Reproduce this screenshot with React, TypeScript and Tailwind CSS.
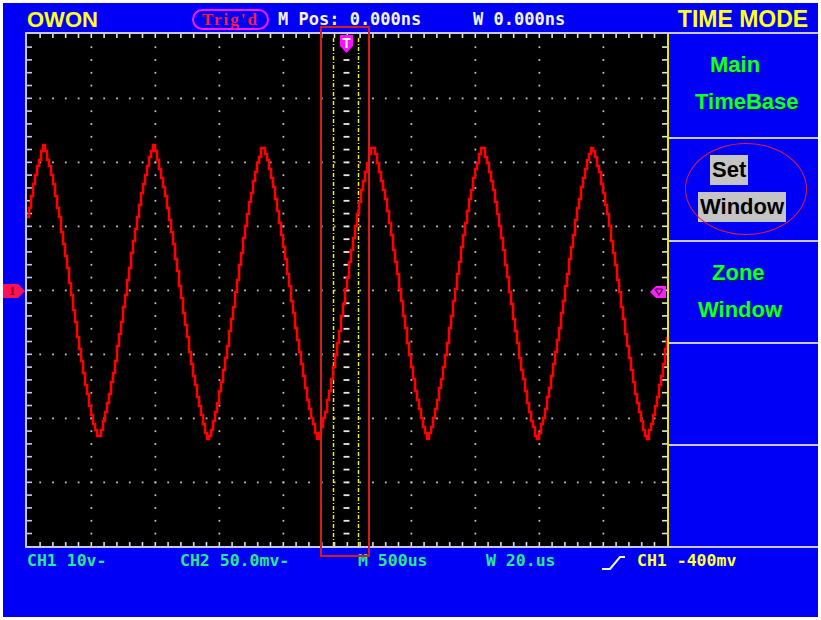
import React from 'react';

const W = 640;
const H = 512;
const DIV = 64;
const SUB = 12.8;

// trace: part sine, part triangle, drawn as a staircase like the scope display
const buildTrace = () => {
  const period = 109.7;
  const yAt = (x: number) => {
    let p = ((x - 16) / period) % 1;
    if (p < 0) p += 1;
    const tri = 1 - 4 * Math.min(p, 1 - p);
    const v = 0.45 * Math.cos(2 * Math.PI * p) + 0.55 * tri;
    return Math.round((258.5 - 147.5 * v) / 3) * 3;
  };
  let d = `M0 ${yAt(0)}`;
  for (let x = 2; x <= W; x += 2) {
    d += ` H${x} V${yAt(x)}`;
  }
  return d;
};

const ScopeScreen: React.FC = () => {
  const subs = Array.from({ length: 49 }, (_, i) => (i + 1) * SUB);
  const vSubs = Array.from({ length: 39 }, (_, i) => (i + 1) * SUB);

  return (
    <svg width={W} height={H} viewBox={`0 0 ${W} ${H}`} className="block bg-black">
      {/* dotted grid, vertical lines */}
      {[1, 2, 3, 4, 6, 7, 8, 9].map((k) =>
        vSubs.map((y) => (
          <rect key={`v${k}-${y}`} x={k * DIV - 0.5} y={y - 0.5} width={1.8} height={1.8} fill="#c0c0c0" />
        ))
      )}
      {/* dotted grid, horizontal lines */}
      {[1, 2, 3, 4, 5, 6, 7].map((k) =>
        subs.map((x) => (
          <rect key={`h${k}-${x}`} x={x - 0.5} y={k * DIV - 0.5} width={1.8} height={1.8} fill="#c0c0c0" />
        ))
      )}
      {/* centre axis ticks */}
      {vSubs.map((y) => (
        <rect key={`c${y}`} x={316.5} y={y - 0.5} width={6} height={1.8} fill="#e8e8e8" />
      ))}
      {/* edge ticks */}
      {subs.map((x) => (
        <g key={`t${x}`}>
          <rect x={x - 0.5} y={0} width={1.6} height={4} fill="#e8e8b8" />
          <rect x={x - 0.5} y={H - 4} width={1.6} height={4} fill="#d8d8f0" />
        </g>
      ))}
      {vSubs.map((y) => (
        <g key={`s${y}`}>
          <rect x={0} y={y - 0.5} width={5} height={1.6} fill="#c8c8ff" />
          <rect x={W - 5} y={y - 0.5} width={5} height={1.6} fill="#e8e8c0" />
        </g>
      ))}

      {/* zone window lines */}
      <line x1={306.5} y1={4} x2={306.5} y2={H} stroke="#f0f000" strokeWidth={1.5} strokeDasharray="4 2 1 2" />
      <line x1={331.5} y1={4} x2={331.5} y2={H} stroke="#f0f000" strokeWidth={1.5} strokeDasharray="4 2 1 2" />

      {/* CH1 trace */}
      <path d={buildTrace()} fill="none" stroke="#ff0000" strokeWidth={2.6} strokeLinejoin="miter" />

      {/* trigger position marker */}
      <path d="M313 1 H326 V12 L319.5 19 L313 12 Z" fill="#ff10ff" />
      <path d="M315.5 4 H323.5 V6 H320.5 V14 H318.5 V6 H315.5 Z" fill="#ffffff" />

      {/* trigger level marker */}
      <path d="M623 258 L629 252 H639 V264 H629 Z" fill="#ff20ff" />
      <path d="M628 255 L632 261 L636 255" fill="none" stroke="#600060" strokeWidth={1.4} />
      <line x1={629} y1={255} x2={635} y2={255} stroke="#600060" strokeWidth={1.2} />
    </svg>
  );
};

const MenuItem: React.FC<{
  lines: { text: string; pad: string }[];
  selected?: boolean;
  height: string;
}> = ({ lines, selected, height }) => (
  <div className={`${height} pt-[12px] font-['Liberation_Sans',Arial,sans-serif] text-[22px] font-bold`}>
    {lines.map((l) => (
      <div key={l.text} className={`h-[37px] flex items-center ${l.pad}`}>
        {selected ? (
          <span className="bg-[#c4c4c4] text-black h-[30px] leading-[30px] px-[2px]">{l.text}</span>
        ) : (
          <span className="text-[#10ff40] [text-shadow:1px_1px_0_#003010]">{l.text}</span>
        )}
      </div>
    ))}
  </div>
);

const Sep = () => <div className="h-[2px] bg-[#c8c8f0]" />;

export default function App() {
  const mono = "font-['DejaVu_Sans_Mono','Liberation_Mono',monospace] font-bold";
  return (
    <div className="relative w-[821px] h-[620px] bg-white p-[3px]">
      <div className="flex flex-col h-full bg-[#0000f6]">
        {/* top status bar */}
        <div className="flex items-center h-[29px] pt-[4px] shrink-0">
          <div className="w-[189px] pl-[24px] font-['Liberation_Sans',Arial,sans-serif] font-bold text-[22px] text-[#ffff20] leading-none">
            OWON
          </div>
          <div className="w-[77px] h-[21px] rounded-full border-2 border-[#ff18ff] flex items-center justify-center">
            <span className="font-['Liberation_Serif','Times_New_Roman',serif] font-bold text-[17px] leading-none tracking-[2px] text-[#ff1848]">
              Trig'd
            </span>
          </div>
          <div className={`ml-[9px] w-[195px] text-[17px] leading-none text-[#f4f4f4] ${mono}`}>M Pos: 0.000ns</div>
          <div className={`flex-1 text-[17px] leading-none text-[#f4f4f4] ${mono}`}>W 0.000ns</div>
          <div className="w-[150px] text-center font-['Liberation_Sans',Arial,sans-serif] font-bold text-[23px] leading-none text-[#ffff20]">
            TIME MODE
          </div>
        </div>

        {/* screen + menu */}
        <div className="ml-[22px] flex border-y-2 border-[#c8c8f0] shrink-0">
          <div className="border-l-2 border-r-2 border-l-[#c8c8f0] border-r-[#e8e800]">
            <ScopeScreen />
          </div>
          <div className="flex-1 flex flex-col">
            <MenuItem
              height="h-[103px]"
              lines={[
                { text: 'Main', pad: 'pl-[41px]' },
                { text: 'TimeBase', pad: 'pl-[26px]' },
              ]}
            />
            <Sep />
            <MenuItem
              height="h-[101px]"
              selected
              lines={[
                { text: 'Set', pad: 'pl-[41px]' },
                { text: 'Window', pad: 'pl-[29px]' },
              ]}
            />
            <Sep />
            <MenuItem
              height="h-[100px]"
              lines={[
                { text: 'Zone', pad: 'pl-[43px]' },
                { text: 'Window', pad: 'pl-[29px]' },
              ]}
            />
            <Sep />
            <div className="h-[100px]" />
            <Sep />
          </div>
        </div>

        {/* bottom status bar */}
        <div className={`flex items-center h-[22px] pt-[4px] pl-[24px] text-[16.5px] leading-none ${mono}`}>
          <div className="w-[153px] text-[#28e890]">CH1 10v-</div>
          <div className="w-[178px] text-[#28e890]">CH2 50.0mv-</div>
          <div className="w-[128px] text-[#28e890]">M 500us</div>
          <div className="w-[116px] text-[#28e890]">W 20.us</div>
          <svg width={35} height={20} viewBox="0 0 35 20" className="block">
            <path d="M0 18 H8 L18 6 H23" fill="none" stroke="#f4f4f4" strokeWidth={2} />
          </svg>
          <div className="text-[#ffff40]">CH1 -400mv</div>
        </div>
      </div>

      {/* channel 1 ground marker */}
      <div className="absolute left-[3px] top-[284px] w-[22px] h-[14px]">
        <svg width={22} height={14} viewBox="0 0 22 14" className="block">
          <path d="M0 0 H15 L22 7 L15 14 H0 Z" fill="#ff1058" />
        </svg>
        <span className="absolute left-[6px] top-[-1px] font-['Liberation_Serif',serif] font-bold text-[13px] leading-[16px] text-[#900010]">
          1
        </span>
      </div>

      {/* annotation overlays */}
      <div className="absolute left-[320px] top-[26px] w-[50px] h-[531px] border-2 border-[#d81c1c]" />
      <div className="absolute left-[685px] top-[143px] w-[122px] h-[92px] rounded-[50%] border border-[#e0203c]" />
    </div>
  );
}
